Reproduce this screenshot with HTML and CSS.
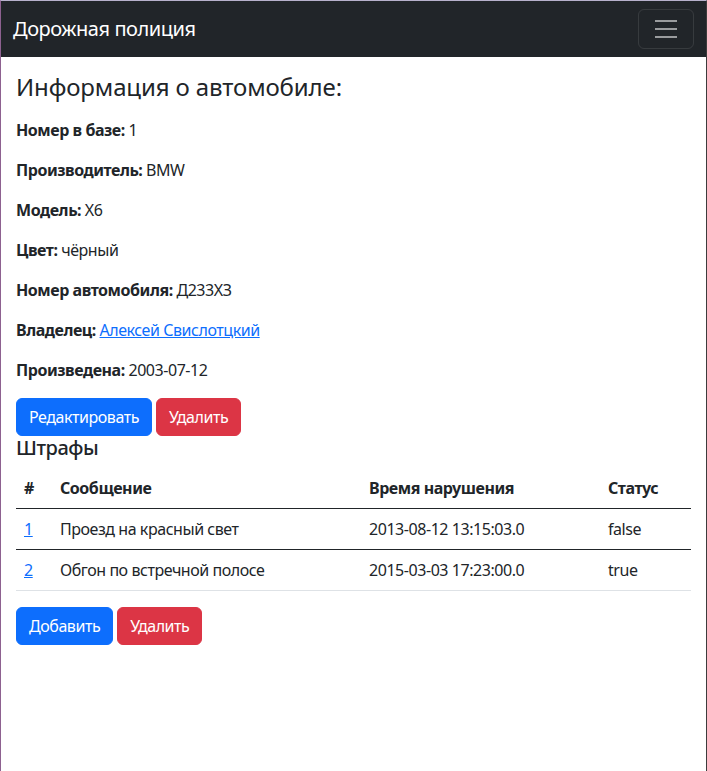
FILE: index.html
```html
<!DOCTYPE html>
<html lang="ru">
<head>
<meta charset="utf-8">
<title>Дорожная полиция</title>
<link rel="stylesheet" href="styles.css">
</head>
<body>
<nav class="navbar">
  <a class="brand" href="#">Дорожная полиция</a>
  <button class="toggler" type="button" aria-label="Меню">
    <svg width="30" height="30" viewBox="0 0 30 30"><path d="M4 7h22M4 15h22M4 23h22" stroke="rgba(255,255,255,0.55)" stroke-width="2" stroke-linecap="butt" fill="none"/></svg>
  </button>
</nav>
<main class="content">
  <h4 class="title">Информация о автомобиле:</h4>
  <p><b>Номер в базе:</b> 1</p>
  <p><b>Производитель:</b> BMW</p>
  <p><b>Модель:</b> X6</p>
  <p><b>Цвет:</b> чёрный</p>
  <p><b>Номер автомобиля:</b> Д233ХЗ</p>
  <p><b>Владелец:</b> <a href="#">Алексей Свислотцкий</a></p>
  <p><b>Произведена:</b> 2003-07-12</p>
  <div class="actions">
    <a class="btn btn-primary" href="#">Редактировать</a>
    <a class="btn btn-danger" href="#">Удалить</a>
  </div>
  <h5 class="subtitle">Штрафы</h5>
  <table class="table">
    <thead>
      <tr class="dark"><th class="c-num">#</th><th class="c-msg">Сообщение</th><th class="c-time">Время нарушения</th><th>Статус</th></tr>
    </thead>
    <tbody>
      <tr class="dark"><td><a href="#">1</a></td><td>Проезд на красный свет</td><td>2013-08-12 13:15:03.0</td><td>false</td></tr>
      <tr><td><a href="#">2</a></td><td>Обгон по встречной полосе</td><td>2015-03-03 17:23:00.0</td><td>true</td></tr>
    </tbody>
  </table>
  <div class="actions">
    <a class="btn btn-primary" href="#">Добавить</a>
    <a class="btn btn-danger" href="#">Удалить</a>
  </div>
</main>
</body>
</html>
```
FILE: styles.css
```css
html, body { height: 100%; }
body {
  margin: 0;
  box-sizing: border-box;
  min-height: 100vh;
  border-top: 1px solid #b7b1cc;
  border-left: 1px solid #8d6190;
  border-right: 1px solid #3c3c3c;
  font-family: "Noto Sans", "Open Sans", sans-serif;
  font-size: 16px;
  line-height: 1.5;
  letter-spacing: -0.028em;
  color: #212529;
  background: #fff;
}
.navbar {
  background: #212529;
  display: flex;
  align-items: center;
  justify-content: space-between;
  padding: 8px 12px;
}
.brand {
  color: #fff;
  text-decoration: none;
  font-size: 20px;
  line-height: 30px;
}
.toggler {
  background: transparent;
  border: 1px solid rgba(255,255,255,0.1);
  border-radius: 6px;
  padding: 4px 12px;
  display: flex;
  align-items: center;
}
.toggler svg { display: block; }
.content { padding: 16px 15px 0; }
.title {
  font-size: 24px;
  font-weight: 400;
  line-height: 1.2;
  letter-spacing: -0.005em;
  margin: 0 0 16px;
}
p { margin: 0 0 16px; }
b { font-weight: 700; }
a { color: #0d6efd; }
.actions { display: flex; gap: 4px; }
.btn {
  display: inline-block;
  padding: 6px 12px;
  border-radius: 6px;
  color: #fff;
  text-decoration: none;
  font-size: 16px;
  line-height: 24px;
  border: 1px solid transparent;
}
.btn-primary { background: #0d6efd; border-color: #0d6efd; }
.btn-danger { background: #dc3545; border-color: #dc3545; }
.subtitle {
  font-size: 20px;
  font-weight: 500;
  line-height: 1.2;
  margin: 0 0 8px;
}
.table {
  width: 100%;
  border-collapse: collapse;
  margin-bottom: 16px;
}
.table th, .table td {
  text-align: left;
  padding: 8px;
  border-bottom: 1px solid #dee2e6;
  vertical-align: top;
}
.table th { font-weight: 700; }
.table tr.dark > * { border-bottom-color: #212529; }
.c-num { width: 20px; }
.c-msg { width: 293px; }
.c-time { width: 223px; }
```
